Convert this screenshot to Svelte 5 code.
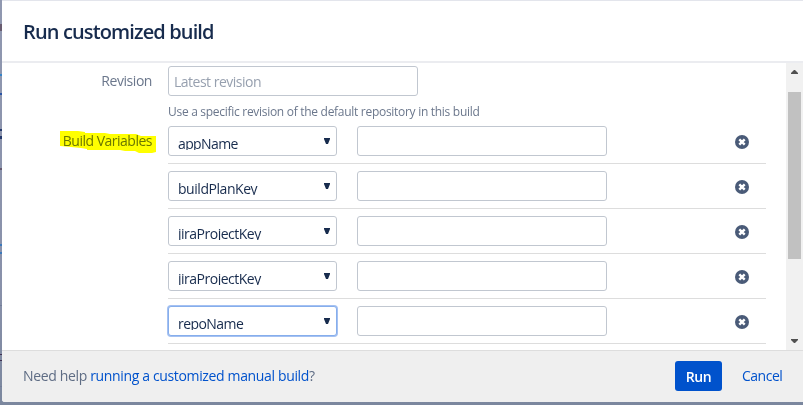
<script>
  const variables = [
    { name: 'appName', spacing: -0.62 },
    { name: 'buildPlanKey', spacing: -0.45 },
    { name: 'jiraProjectKey', spacing: -0.5 },
    { name: 'jiraProjectKey', spacing: -0.5 },
    { name: 'repoName', spacing: -0.55, focused: true }
  ];
</script>

<div class="page">
  <div class="behind" aria-hidden="true">
    <i style="top:24px;height:7px;background:#685c70"></i>
    <i style="top:74px;height:2px;background:#3484c8"></i>
    <i style="top:93px;height:2px;background:#2953a4"></i>
    <i style="top:129px;height:2px;background:#24396b"></i>
    <i style="top:136px;height:3px;background:#24396b"></i>
    <i style="top:168px;height:2px;background:#64596f"></i>
    <i style="top:244px;height:2px;background:#3b79bb"></i>
    <i style="top:252px;height:2px;background:#3b79bb"></i>
    <i style="top:305px;height:1px;background:#737e99"></i>
    <i style="top:354px;height:1px;background:#403052"></i>
    <i style="top:360px;height:1px;background:#403052"></i>
    <i style="top:386px;height:1px;background:#737e99"></i>
  </div>
  <section class="dialog">
    <header><h2>Run customized build</h2></header>
    <div class="body">
      <div class="form">
        <div class="field">
          <span class="label revision">Revision</span>
          <div class="box wide"><span class="placeholder">Latest revision</span></div>
        </div>
        <p class="hint">Use a specific revision of the default repository in this build</p>
        <div class="variables">
          <span class="label build">
            <span>Build Variables</span>
            <svg class="marker" width="98" height="26" viewBox="0 0 98 26">
              <path d="M1 3H19L26 4V5H46L51 6H77L82 8H97V24L93 25H80L76 23H66L61 22H28V21L22 20L12 19L1 18Z" fill="#ff0" />
            </svg>
          </span>
          <div class="rows">
            {#each variables as v}
              <div class="row">
                <div class="box select" class:focused={v.focused}>
                  <div class="value" style="letter-spacing:{v.spacing}px">{v.name}</div>
                  <svg class="arrow" width="6" height="6" viewBox="0 0 6 6"><path d="M0 0H6V1L4 6H2L0 1Z" fill="#172b4d" /></svg>
                </div>
                <div class="box wide"></div>
                <svg class="remove" width="14" height="14" viewBox="0 0 14 14">
                  <circle cx="7" cy="7" r="7" fill="#4a5b78" />
                  <path d="M4.3 4.3L9.7 9.7M9.7 4.3L4.3 9.7" stroke="#fff" stroke-width="2.4" />
                </svg>
              </div>
            {/each}
          </div>
        </div>
      </div>
      <div class="scrollbar">
        <svg width="7" height="4" viewBox="0 0 7 4"><path d="M0 4V3L3 0H4L7 3V4Z" fill="#505050" /></svg>
        <div class="track"><div class="thumb"></div></div>
        <svg width="7" height="4" viewBox="0 0 7 4"><path d="M0 0V1L3 4H4L7 1V0Z" fill="#505050" /></svg>
      </div>
    </div>
    <footer>
      <p>Need help <span class="link">running a customized manual build</span>?</p>
      <div class="actions">
        <button>Run</button>
        <span class="link cancel">Cancel</span>
      </div>
    </footer>
  </section>
</div>

<style>
  .page {
    position: relative;
    box-sizing: border-box;
    width: 803px;
    height: 405px;
    padding: 1px 0 3px 2px;
    overflow: hidden;
    background: linear-gradient(#9098b0, #8991aa 70%, #7b879e);
    font-family: "Open Sans", "Noto Sans", sans-serif;
    font-size: 14px;
    color: #172b4d;
    white-space: nowrap;
  }
  .page::before {
    content: "";
    position: absolute;
    top: 0;
    left: 2px;
    right: 0;
    height: 1px;
    background: #e3e5ec;
  }
  .behind i { position: absolute; left: 0; width: 2px; }
  .dialog {
    position: relative;
    display: flex;
    flex-direction: column;
    height: 401px;
    background: #fff;
    border-radius: 0 0 0 3px;
    overflow: hidden;
  }
  header {
    box-sizing: border-box;
    height: 62px;
    padding: 17px 0 0 21px;
    border-bottom: 2px solid #ebecf0;
  }
  h2 {
    margin: 0;
    font-size: 20px;
    line-height: 28px;
    font-weight: 600;
    letter-spacing: -0.87px;
  }
  .body { display: flex; height: 287px; flex: none; overflow: hidden; }
  .form { flex: 1; padding-top: 3px; }
  .field, .variables { display: flex; }
  .label {
    position: relative;
    width: 150px;
    margin-right: 16px;
    flex: none;
    text-align: right;
    line-height: 20px;
    color: #6b778c;
  }
  .revision { padding-top: 5px; letter-spacing: -0.45px; }
  .build { padding-top: 12px; letter-spacing: -0.5px; }
  .marker { position: absolute; left: 57px; top: 9px; mix-blend-mode: multiply; }
  .box {
    box-sizing: border-box;
    height: 30px;
    border: 1px solid #c1c7d0;
    border-radius: 3px;
    background: #fff;
  }
  .wide { width: 250px; }
  .placeholder {
    display: block;
    padding: 5px 0 0 5px;
    line-height: 20px;
    color: #97a0af;
    letter-spacing: -0.5px;
  }
  .hint {
    margin: 8px 0 0 166px;
    height: 15px;
    font-size: 12px;
    line-height: 16px;
    letter-spacing: -0.29px;
    color: #6b778c;
  }
  .rows { width: 598px; }
  .row {
    box-sizing: border-box;
    display: flex;
    align-items: flex-start;
    height: 45px;
    padding-top: 7px;
    border-bottom: 1px solid #ddd;
  }
  .select { position: relative; width: 169px; margin-right: 20px; }
  .value {
    height: 23px;
    padding: 0 28px 0 9px;
    line-height: 34px;
    overflow: hidden;
  }
  .arrow { position: absolute; right: 6px; top: 11px; }
  .focused { border-color: #86aeec; box-shadow: 0 0 0 1px #a5c1f2; }
  .remove { margin: 9px 17px 0 auto; }
  .scrollbar {
    width: 17px;
    box-sizing: border-box;
    display: flex;
    flex-direction: column;
    align-items: center;
    justify-content: space-between;
    padding: 7px 0;
    background: #f1f1f1;
  }
  .scrollbar svg { flex: none; }
  .track { width: 13px; flex: 1; padding-top: 18px; }
  .thumb { height: 167px; background: #c1c1c1; }
  footer {
    box-sizing: border-box;
    flex: 1;
    display: flex;
    justify-content: space-between;
    align-items: flex-start;
    padding: 10px 21px 0 21px;
    border-top: 1px solid #ddd;
    background: #efefef;
  }
  footer p { margin: 5px 0 0; line-height: 20px; letter-spacing: -0.35px; color: #5e6c84; }
  .link { color: #0052cc; }
  .actions { display: flex; }
  button {
    width: 47px;
    height: 30px;
    padding: 0;
    border: 0;
    border-radius: 3px;
    background: #0052cc;
    color: #fff;
    font: 600 14px "Open Sans", "Noto Sans", sans-serif;
    letter-spacing: -0.4px;
  }
  .cancel { width: 40px; margin: 5px 0 0 20px; line-height: 20px; letter-spacing: -0.5px; }
</style>
